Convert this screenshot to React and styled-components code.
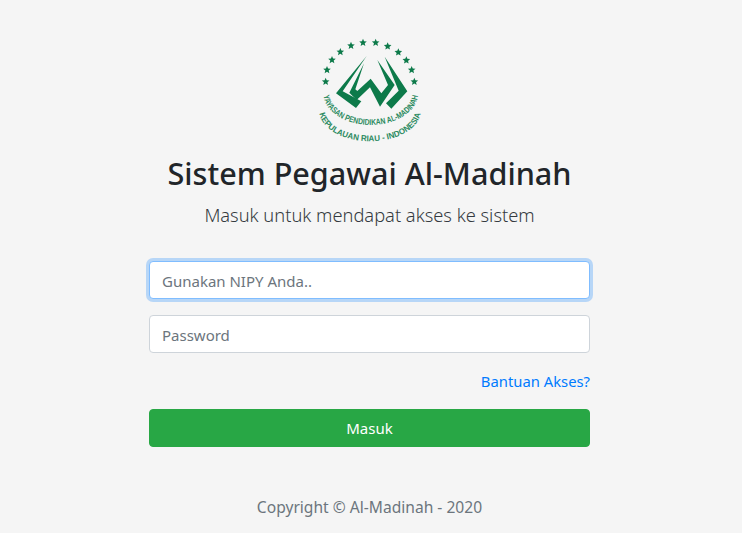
import React from 'react';
import styled, { createGlobalStyle } from 'styled-components';

const GlobalStyle = createGlobalStyle`
    html, body {
        margin: 0;
        padding: 0;
        background-color: #f5f5f5;
    }
    body {
        font-family: "Noto Sans", "Open Sans", "Liberation Sans", sans-serif;
        color: #212529;
    }
`;

const Page = styled.div`
    width: 739px;
    height: 533px;
    overflow: hidden;
    display: flex;
    flex-direction: column;
    align-items: center;
    padding-top: 30px;
    box-sizing: border-box;
`;

const Logo = styled.svg`
    display: block;
    width: 140px;
    height: 120px;
`;

const Title = styled.h1`
    margin: 0;
    height: 46px;
    line-height: 46px;
    font-size: 30.6px;
    font-weight: 500;
    color: #212529;
    white-space: nowrap;
`;

const Lead = styled.p`
    margin: 4px 0 0;
    height: 30px;
    line-height: 30px;
    font-size: 18.3px;
    font-weight: 300;
    color: #343a40;
    white-space: nowrap;
`;

const Form = styled.form`
    width: 441px;
    margin-top: 31px;
    display: flex;
    flex-direction: column;
`;

const Input = styled.input`
    box-sizing: border-box;
    width: 100%;
    height: 38px;
    padding: 8px 12px 6px;
    margin-bottom: 16px;
    font-family: inherit;
    font-size: 15px;
    color: #495057;
    background-color: #fff;
    border: 1px solid ${(p) => (p.$focused ? '#80bdff' : '#ced4da')};
    border-radius: 4px;
    outline: none;
    box-shadow: ${(p) => (p.$focused ? '0 0 0 3px rgba(0, 123, 255, 0.25)' : 'none')};
    &::placeholder {
        color: #6c757d;
        opacity: 1;
    }
`;

const HelpRow = styled.div`
    display: flex;
    justify-content: flex-end;
    height: 24px;
    margin: 0 0 16px;
`;

const HelpLink = styled.a`
    font-size: 14.8px;
    line-height: 24px;
    color: #007bff;
    text-decoration: none;
`;

const SubmitButton = styled.button`
    height: 38px;
    border: 1px solid #28a745;
    border-radius: 4px;
    background-color: #28a745;
    color: #fff;
    font-family: inherit;
    font-size: 15px;
    font-weight: 400;
`;

const Copyright = styled.p`
    margin: 48px 0 0;
    line-height: 24px;
    font-size: 15.6px;
    color: #6c757d;
`;

const STARS = [
    [77, 155], [81, 120], [96, 90], [121, 66], [153, 47], [189, 38],
    [227, 38], [263, 49], [295, 67], [319, 91], [335, 120], [343, 155],
];

const starPoints = (cx, cy, r) => {
    const pts = [];
    for (let i = 0; i < 10; i++) {
        const a = -Math.PI / 2 + (i * Math.PI) / 5;
        const d = i % 2 === 0 ? r : r * 0.45;
        pts.push(`${(cx + d * Math.cos(a)).toFixed(1)},${(cy + d * Math.sin(a)).toFixed(1)}`);
    }
    return pts.join(' ');
};

const AlMadinahLogo = () => (
    <Logo viewBox="0 0 420 360">
        {STARS.map(([x, y]) => (
            <polygon key={`${x}-${y}`} points={starPoints(x, y, 12)} fill="#0d7a4a" />
        ))}
        <g fill="#0d7a4a">
            <polygon points="200,78 108,190 168,234 184,214 128,184" />
            <polygon points="192,100 148,188 170,210 210,172 240,230 284,165 232,90 264,165 244,190 212,146 172,183 166,178" />
            <polygon points="254,80 322,184 274,236 258,220 296,182" />
        </g>
        <defs>
            <path id="ring-inner" d="M70,190 A142,95 0 0 0 354,190" />
            <path id="ring-outer" d="M58,242 A152,92 0 0 0 362,242" />
        </defs>
        <text fontFamily="Liberation Sans, sans-serif" fontSize="25" fontWeight="700" fill="#2b8a60">
            <textPath href="#ring-inner" startOffset="50%" textAnchor="middle" textLength="362" lengthAdjust="spacingAndGlyphs">YAYASAN PENDIDIKAN AL-MADINAH</textPath>
        </text>
        <text fontFamily="Liberation Sans, sans-serif" fontSize="25" fontWeight="700" fill="#2b8a60">
            <textPath href="#ring-outer" startOffset="50%" textAnchor="middle" textLength="372" lengthAdjust="spacingAndGlyphs">KEPULAUAN RIAU - INDONESIA</textPath>
        </text>
    </Logo>
);

const App = () => (
    <>
        <GlobalStyle />
        <Page>
            <AlMadinahLogo />
            <Title>Sistem Pegawai Al-Madinah</Title>
            <Lead>Masuk untuk mendapat akses ke sistem</Lead>
            <Form onSubmit={(e) => e.preventDefault()}>
                <Input $focused type="text" placeholder="Gunakan NIPY Anda.." />
                <Input type="password" placeholder="Password" />
                <HelpRow>
                    <HelpLink href="#">Bantuan Akses?</HelpLink>
                </HelpRow>
                <SubmitButton type="submit">Masuk</SubmitButton>
            </Form>
            <Copyright>Copyright © Al-Madinah - 2020</Copyright>
        </Page>
    </>
);

export default App;
